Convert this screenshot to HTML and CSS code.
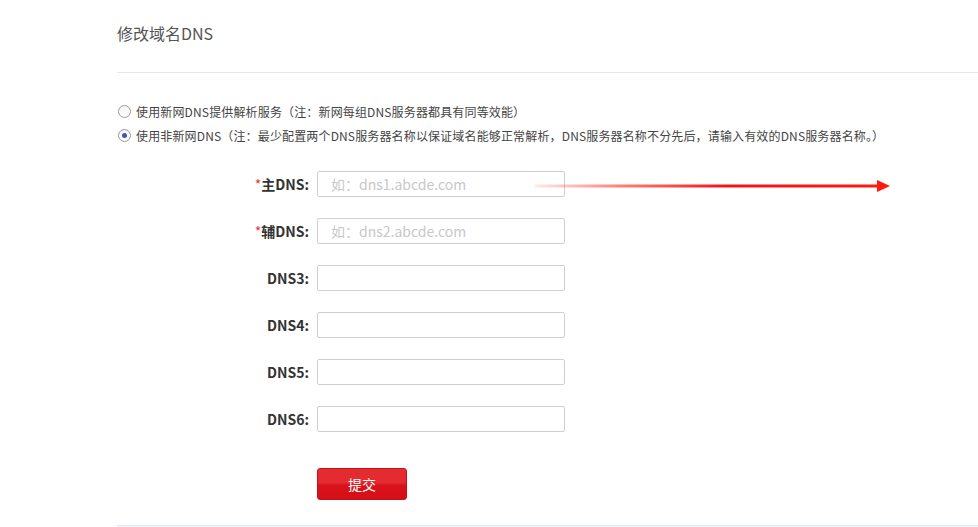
FILE: index.html
```html
<!DOCTYPE html>
<html lang="zh-CN">
<head>
<meta charset="utf-8">
<title>修改域名DNS</title>
<link rel="stylesheet" href="styles.css">
</head>
<body>
<div class="page">
  <div class="header">
    <h1 class="title">修改域名DNS</h1>
  </div>
  <div class="options">
    <label class="option"><span class="radio"></span><span>使用新网DNS提供解析服务（注：新网每组DNS服务器都具有同等效能）</span></label>
    <label class="option"><span class="radio checked"></span><span>使用非新网DNS（注：最少配置两个DNS服务器名称以保证域名能够正常解析，DNS服务器名称不分先后，请输入有效的DNS服务器名称。）</span></label>
  </div>
  <div class="form">
    <div class="row"><span class="label"><em>*</em>主DNS:</span><input class="field" placeholder="如：dns1.abcde.com"></div>
    <div class="row"><span class="label"><em>*</em>辅DNS:</span><input class="field" placeholder="如：dns2.abcde.com"></div>
    <div class="row"><span class="label">DNS3:</span><input class="field"></div>
    <div class="row"><span class="label">DNS4:</span><input class="field"></div>
    <div class="row"><span class="label">DNS5:</span><input class="field"></div>
    <div class="row"><span class="label">DNS6:</span><input class="field"></div>
    <div class="row actions"><span class="label"></span><button class="submit">提交</button></div>
  </div>
  <div class="footer-line"></div>
  <svg class="arrow" width="360" height="14" viewBox="0 0 360 14">
    <defs>
      <linearGradient id="g" x1="0" y1="0" x2="1" y2="0">
        <stop offset="0" stop-color="#ff2a1a" stop-opacity="0.1"/>
        <stop offset="0.25" stop-color="#ff2a1a" stop-opacity="0.6"/>
        <stop offset="0.55" stop-color="#f0141a" stop-opacity="1"/>
        <stop offset="1" stop-color="#ff1a10" stop-opacity="1"/>
      </linearGradient>
    </defs>
    <rect x="0" y="5.5" width="345" height="3" fill="url(#g)"/>
    <polygon points="342,1 355,7 342,13" fill="#ff1a10"/>
  </svg>
</div>
</body>
</html>
```
FILE: styles.css
```css
* { box-sizing: border-box; }
html, body { margin: 0; padding: 0; background: #fff; }
body {
  font-family: "Noto Sans CJK SC", "Liberation Sans", sans-serif;
  color: #333;
  overflow: hidden;
}
.page {
  position: relative;
  padding-left: 117px;
  width: 978px;
  height: 527px;
}
.header {
  height: 73px;
  padding-top: 22px;
  border-bottom: 1px solid #e6e6e6;
}
.title {
  margin: 0;
  font-size: 16px;
  line-height: 22px;
  font-weight: normal;
  color: #555;
}
.options {
  margin-top: 26px;
  display: flex;
  flex-direction: column;
}
.option {
  display: flex;
  align-items: center;
  height: 24px;
  font-size: 12px;
  letter-spacing: 0.15px;
  color: #444;
  gap: 5px;
}
.radio {
  width: 13px;
  height: 13px;
  margin-left: 1px;
  border-radius: 50%;
  border: 1px solid #9a9a9a;
  background: linear-gradient(#f4f4f4, #ffffff);
  display: inline-flex;
  align-items: center;
  justify-content: center;
  flex: none;
}
.radio.checked::after {
  content: "";
  width: 5px;
  height: 5px;
  border-radius: 50%;
  background: #3b5aa8;
}
.form {
  margin-top: 24px;
  display: flex;
  flex-direction: column;
  gap: 21px;
}
.row {
  display: flex;
  align-items: center;
  gap: 8px;
  height: 26px;
}
.label {
  width: 192px;
  text-align: right;
  font-size: 14px;
  font-weight: bold;
  color: #333;
}
.label em {
  font-style: normal;
  color: #e4393c;
  font-weight: normal;
}
.field {
  width: 248px;
  height: 26px;
  border: 1px solid #cfcfcf;
  border-radius: 2px;
  padding: 0 13px;
  font-family: "Noto Sans CJK SC", "Liberation Sans", sans-serif;
  font-size: 14px;
  color: #333;
  outline: none;
}
.field::placeholder { color: #c8c8c8; }
.actions {
  margin-top: 15px;
  height: 32px;
}
.submit {
  width: 90px;
  height: 32px;
  border: 1px solid #c8101a;
  border-radius: 3px;
  background: linear-gradient(#e42c30 0%, #e42c30 45%, #d8121a 55%, #d60f17 100%);
  color: #fff;
  font-family: "Noto Sans CJK SC", "Liberation Sans", sans-serif;
  font-size: 14px;
  padding: 0;
}
.footer-line {
  margin-top: 25px;
  height: 2px;
  border-top: 1px solid #e3e8ec;
  background: #f3f6f8;
}
.arrow {
  position: absolute;
  left: 535px;
  top: 179px;
}
```
